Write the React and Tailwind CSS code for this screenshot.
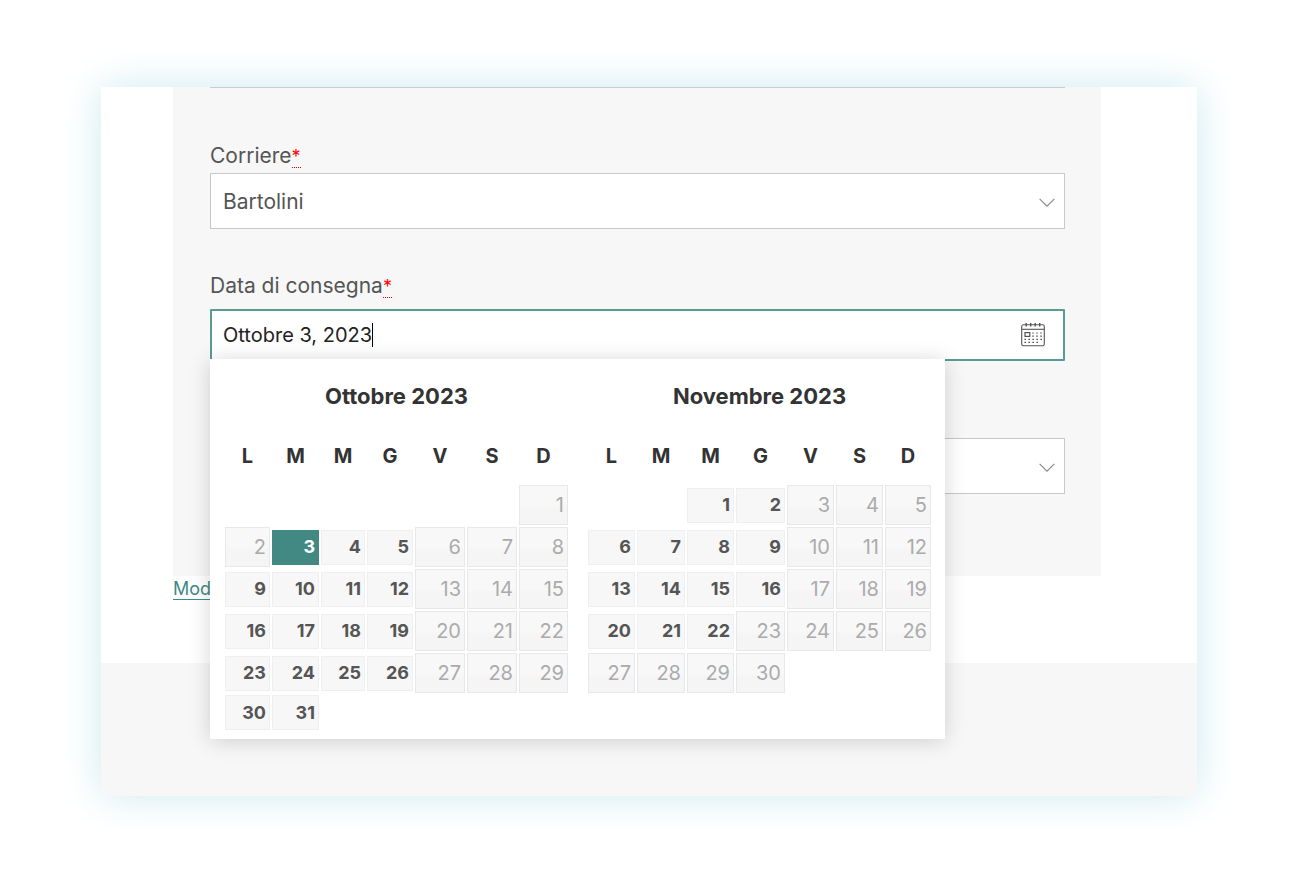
import React, { useState } from 'react';

const WEEKDAYS = [
  { letter: 'L', name: 'Lunedì' },
  { letter: 'M', name: 'Martedì' },
  { letter: 'M', name: 'Mercoledì' },
  { letter: 'G', name: 'Giovedì' },
  { letter: 'V', name: 'Venerdì' },
  { letter: 'S', name: 'Sabato' },
  { letter: 'D', name: 'Domenica' },
];

// offset = empty cells before day 1 (weeks start on Monday)
const MONTHS = [
  {
    name: 'Ottobre',
    year: 2023,
    offset: 6,
    days: 31,
    disabled: [1, 2, 6, 7, 8, 13, 14, 15, 20, 21, 22, 27, 28, 29],
    cols: ['w-[47px]', 'w-[49px]', 'w-[46px]', 'w-[48px]', 'w-[52px]', 'w-[52px]', 'w-[51px]'],
  },
  {
    name: 'Novembre',
    year: 2023,
    offset: 2,
    days: 30,
    disabled: [3, 4, 5, 10, 11, 12, 17, 18, 19, 23, 24, 25, 26, 27, 28, 29, 30],
    cols: ['w-[49px]', 'w-[50px]', 'w-[49px]', 'w-[51px]', 'w-[49px]', 'w-[49px]', 'w-[48px]'],
  },
];

const getWeeks = ({ offset, days }) => {
  const cells = [...Array(offset).fill(null), ...Array.from({ length: days }, (_, i) => i + 1)];
  while (cells.length % 7) cells.push(null);

  const weeks = [];
  for (let i = 0; i < cells.length; i += 7) weeks.push(cells.slice(i, i + 7));
  return weeks;
};

const ChevronIcon = () => (
  <svg className="h-3 w-4" viewBox="0 0 16 12" fill="none" stroke="#8c8c8c" strokeWidth="1.2" aria-hidden="true">
    <path d="M0.6 2.8 L8 10.2 L15.4 2.8" />
  </svg>
);

const CalendarIcon = () => (
  <svg className="h-6 w-6" viewBox="0 0 24 24" fill="none" stroke="#555" aria-hidden="true">
    <rect x="0.7" y="1.8" width="22.6" height="21" rx="1.6" strokeWidth="1.1" />
    <path d="M0.7 6.3H23.3" strokeWidth="1.1" />
    <path d="M5.2 0V3.6 M9.7 0V3.6 M14.2 0V3.6 M18.7 0V3.6" strokeWidth="1.4" />
    <rect x="4" y="9.6" width="4.8" height="3.8" strokeWidth="1.2" />
    <path
      d="M11.2 10H21 M11.2 13.1H21 M3.4 16.3H21 M3.4 19.4H17"
      strokeWidth="1.2"
      strokeDasharray="1.6 2.4"
    />
  </svg>
);

const Label = ({ htmlFor, children }) => (
  <label htmlFor={htmlFor} className="block text-[21px] leading-[30px] text-[#555]">
    {children}
    <abbr title="obbligatorio" className="border-b border-dotted border-[#f00] text-lg text-[#f00] [text-decoration:none]">
      *
    </abbr>
  </label>
);

const Select = ({ children, ...props }) => (
  <div className="relative">
    <select
      {...props}
      className="block h-14 w-full appearance-none border border-[#c8c8c8] bg-white pt-0.5 pr-10 pl-3 text-[21px] text-[#555] outline-none"
    >
      {children}
    </select>
    <div className="pointer-events-none absolute inset-y-0 right-2.5 flex items-center pt-0.5">
      <ChevronIcon />
    </div>
  </div>
);

const Month = ({ month, selected, onSelect }) => {
  const getDayStyle = (day, isDisabled) => {
    if (isDisabled) {
      return 'h-10 border-[#e8e8e8] bg-linear-to-b from-[#f8f8f8] from-50% to-[#f5f5f5] to-60% text-xl text-[#ababab]';
    }
    if (selected === `${month.name} ${day}, ${month.year}`) {
      return 'h-[35px] border-[#428984] bg-[#428984] text-lg font-bold text-white';
    }
    return 'h-[35px] border-[#efefef] bg-[#f7f7f7] text-lg font-bold text-[#555]';
  };

  return (
    <table className="table-fixed border-collapse self-start">
      <caption className="pb-[17px] text-[22px] leading-[30px] font-bold text-[#333]">
        {month.name} {month.year}
      </caption>
      <colgroup>
        {month.cols.map((col, i) => (
          <col key={i} className={col} />
        ))}
      </colgroup>
      <thead>
        <tr className="h-14">
          {WEEKDAYS.map((day) => (
            <th key={day.name} scope="col" title={day.name} className="p-0 text-xl font-bold text-[#333]">
              {day.letter}
            </th>
          ))}
        </tr>
      </thead>
      <tbody>
        {getWeeks(month).map((week, i) => (
          <tr key={i}>
            {week.map((day, j) => (
              <td key={j} className="p-px align-middle">
                {day && (
                  <button
                    type="button"
                    disabled={month.disabled.includes(day)}
                    onClick={() => onSelect(`${month.name} ${day}, ${month.year}`)}
                    className={`block w-full border pr-[3px] text-right ${getDayStyle(day, month.disabled.includes(day))}`}
                  >
                    {day}
                  </button>
                )}
              </td>
            ))}
          </tr>
        ))}
      </tbody>
    </table>
  );
};

const App = () => {
  const [courier, setCourier] = useState('Bartolini');
  const [date, setDate] = useState('Ottobre 3, 2023');

  return (
    <div className="min-h-screen bg-white pt-[87px] pr-[103px] pb-[88px] pl-[101px] font-['Inter',sans-serif]">
      <main className="rounded-b-lg bg-white shadow-[0_0_40px_#cdeaef]">
        <div className="pr-24 pb-[61px] pl-[72px]">
          <form className="bg-[#f7f7f7] pr-9 pb-[82px] pl-[37px]">
            <div className="border-t border-[#c8ccd0] pt-[53px]">
              <Label htmlFor="courier">Corriere</Label>
              <div className="mt-0.5">
                <Select id="courier" value={courier} onChange={(e) => setCourier(e.target.value)}>
                  <option>Bartolini</option>
                </Select>
              </div>
            </div>

            <div className="mt-[42px]">
              <Label htmlFor="delivery-date">Data di consegna</Label>
              <div className="relative mt-2">
                <input
                  id="delivery-date"
                  type="text"
                  value={date}
                  onChange={(e) => setDate(e.target.value)}
                  className="block h-[52px] w-full rounded-[1px] border-2 border-[#5a9a95] bg-white pr-14 pl-[11px] text-xl text-[#222] outline-none"
                />

                {/* Text cursor */}
                <div
                  aria-hidden="true"
                  className="pointer-events-none absolute inset-y-0 left-0 flex items-center pl-[13px] text-xl"
                >
                  <span className="invisible">{date}</span>
                  <span className="h-6 w-px bg-black" />
                </div>

                <div className="pointer-events-none absolute inset-y-0 right-5 flex items-center">
                  <CalendarIcon />
                </div>

                {/* Date picker */}
                <div className="absolute top-[50px] left-0 z-10 flex gap-[18px] bg-white pt-[22px] pr-[13px] pb-2 pl-3.5 shadow-[0_2px_20px_rgba(0,0,0,0.17)]">
                  {MONTHS.map((month) => (
                    <Month key={month.name} month={month} selected={date} onSelect={setDate} />
                  ))}
                </div>
              </div>
            </div>

            <div className="mt-[77px]">
              <Select aria-label="Fascia oraria" />
            </div>
          </form>

          <a href="#" className="block w-fit text-lg leading-[26px] text-[#428984] underline underline-offset-4">
            Mod
          </a>
        </div>

        <footer className="h-[133px] rounded-b-lg bg-[#f7f7f7]" />
      </main>
    </div>
  );
};

export default App;
